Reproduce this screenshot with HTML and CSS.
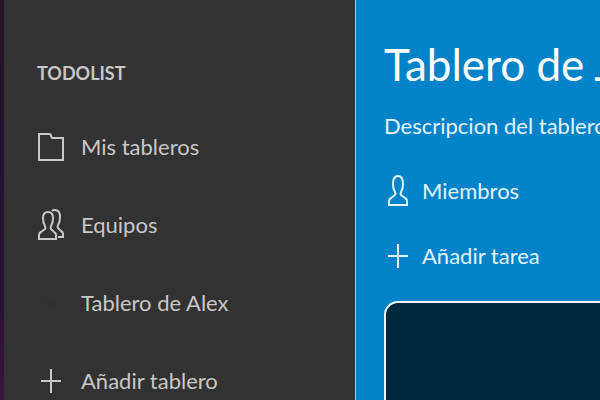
FILE: index.html
```html
<!DOCTYPE html>
<html lang="es">
<head>
<meta charset="utf-8">
<meta name="viewport" content="width=device-width, initial-scale=1">
<title>Todolist</title>
<link rel="stylesheet" href="styles.css">
</head>
<body>
<div class="app">
  <nav class="sidebar">
    <h2 class="brand">TODOLIST</h2>
    <ul class="menu">
      <li><a class="item" href="#"><svg class="icon" viewBox="0 0 28 34"><path d="M2 4H12Q14 4 14 6L15 8H26V30H2Z"/></svg>Mis tableros</a></li>
      <li><a class="item" href="#"><svg class="icon" viewBox="0 0 28 34"><path d="M2 31V27Q2 25 4 24L8 21Q9 20 8 18Q6 15 6 10Q6 4 11 4Q16 4 16 10Q16 15 14 18Q13 20 14 21L17 24Q19 25 19 27V31Z"/><path d="M15 3Q16 2 18 2Q23 2 23 9Q23 14 21 17Q20 19 21 20L24 23Q26 24 26 26V29H21"/></svg>Equipos</a></li>
      <li><a class="item" href="#"><svg class="icon icon-faint" viewBox="0 0 28 34"><circle cx="14" cy="17" r="3"/></svg>Tablero de Alex</a></li>
      <li><button class="item" type="button"><svg class="icon" viewBox="0 0 28 34"><path d="M4 17H24M14 5V29"/></svg>Añadir tablero</button></li>
    </ul>
  </nav>
  <main class="board">
    <h1 class="title">Tablero de Juan</h1>
    <p class="description">Descripcion del tablero</p>
    <div class="actions">
      <button class="item" type="button"><svg class="icon" viewBox="0 0 28 34"><path d="M5 31V27Q5 25 7 24L11 21Q12 20 11 18Q9 15 9 10Q9 2 14 2Q19 2 19 10Q19 15 17 18Q16 20 17 21L21 24Q23 25 23 27V31Z"/></svg>Miembros</button>
      <button class="item" type="button"><svg class="icon" viewBox="0 0 28 34"><path d="M4 17H24M14 5V29"/></svg>Añadir tarea</button>
    </div>
    <section class="card" aria-label="Tareas"></section>
  </main>
</div>
</body>
</html>
```
FILE: styles.css
```css
* {
  box-sizing: border-box;
}

body {
  margin: 0;
  font-family: Lato, "Liberation Sans", sans-serif;
  font-size: 22px;
  line-height: 32px;
  color: #fff;
}

.app {
  display: flex;
  height: 100vh;
  padding-left: 4px;
  background: linear-gradient(#211225, #2b1237 80%, #3d143f);
  overflow: hidden;
}

.sidebar {
  flex: 0 0 352px;
  padding: 57px 32px 0 33px;
  background: #323232;
  border-right: 1px solid #b9c4ca;
  color: #c8c8c8;
}

.brand {
  margin: 0;
  font-size: 18px;
  font-weight: 700;
  line-height: 32px;
}

.menu {
  display: grid;
  gap: 44px;
  margin: 41px 0 0;
  padding: 0;
  list-style: none;
}

.item {
  display: flex;
  align-items: center;
  gap: 16px;
  height: 34px;
  padding: 0;
  border: 0;
  background: none;
  color: inherit;
  font: inherit;
  text-decoration: none;
  white-space: nowrap;
}

.icon {
  flex: none;
  width: 28px;
  height: 34px;
  fill: none;
  stroke: currentColor;
  stroke-width: 2;
}

.icon-faint {
  stroke: #2d3038;
}

.board {
  flex: 1;
  display: flex;
  flex-direction: column;
  min-width: 0;
  padding: 34px 0 0 28px;
  background: #0083c9;
  overflow: hidden;
}

.title {
  margin: 0;
  font-size: 44px;
  font-weight: 400;
  line-height: 60px;
  white-space: nowrap;
}

.description {
  margin: 16px 0 0;
  color: #e4f3fb;
  white-space: nowrap;
}

.actions {
  display: grid;
  gap: 31px;
  margin-top: 32px;
  color: #e4f3fb;
}

.actions .item {
  gap: 10px;
}

.card {
  flex: 1;
  min-width: 320px;
  margin-top: 28px;
  background: #00293d;
  border: solid #e8f2f7;
  border-width: 2px 0 0 2px;
  border-top-left-radius: 14px;
}
```
